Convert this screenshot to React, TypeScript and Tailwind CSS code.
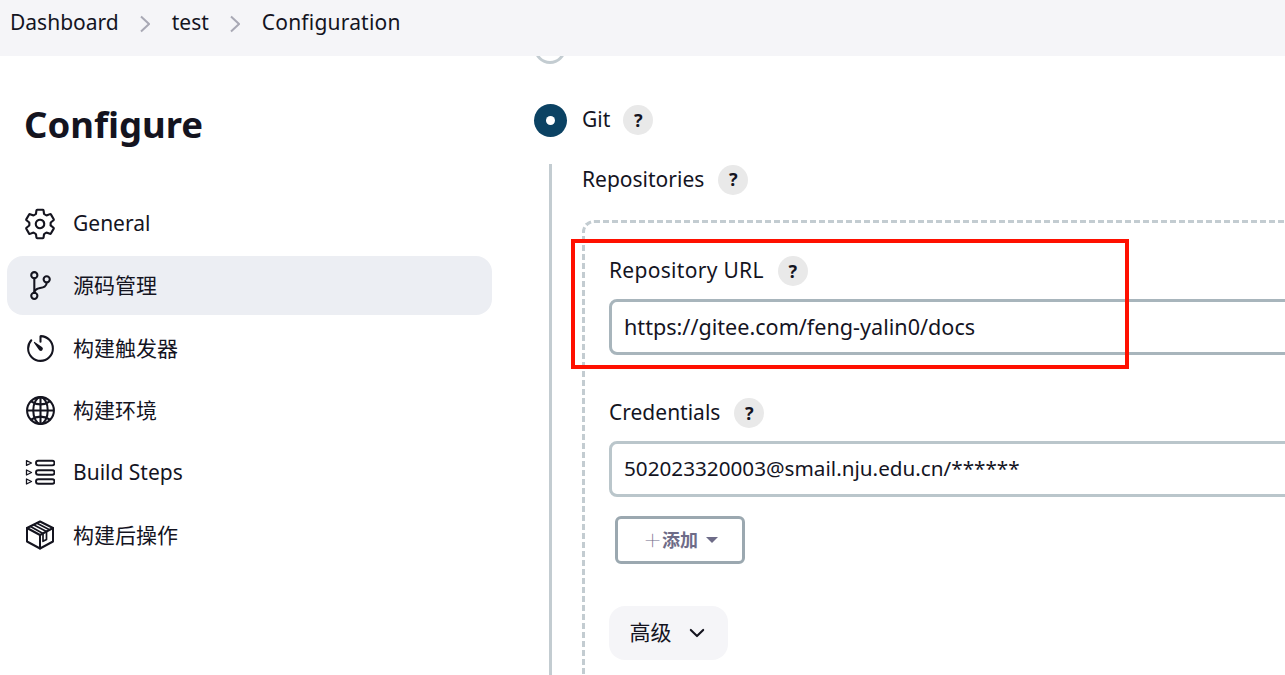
import React from "react";
import { IoSettingsOutline, IoGitBranchOutline, IoTimerOutline, IoGlobeOutline, IoChevronDown } from "react-icons/io5";

const font = { fontFamily: '"Noto Sans", "Noto Sans CJK SC", sans-serif' };

function Help() {
  return (
    <span className="flex h-[30px] w-[30px] shrink-0 items-center justify-center rounded-full bg-[#e9e9e9] text-[18px] font-bold text-[#14141f]">?</span>
  );
}

function Crumb() {
  return (
    <svg className="mx-[21.5px] mt-[1px]" width="10" height="18" viewBox="0 0 10 18" fill="none" stroke="#a9a9b5" strokeWidth="2">
      <path d="M1 1.5 L9 9 L1 16.5" />
    </svg>
  );
}

function StepsIcon() {
  return (
    <svg width="30" height="30" viewBox="0 0 30 30" fill="none" stroke="#14141f" strokeWidth="1.9" strokeLinejoin="round">
      <rect x="11" y="2.8" width="18.5" height="4.6" rx="2.3" />
      <rect x="11" y="12.2" width="18.5" height="4.6" rx="2.3" />
      <rect x="11" y="21.2" width="18.5" height="4.6" rx="2.3" />
      <path d="M1.5 2.6 L6.5 5 L1.5 7.4 Z" strokeWidth="1.3" />
      <path d="M1.5 12 L6.5 14.5 L1.5 17 Z" strokeWidth="1.3" />
      <path d="M1.5 21 L6.5 23.5 L1.5 26 Z" strokeWidth="1.3" />
    </svg>
  );
}

function PackageIcon() {
  return (
    <svg width="30" height="30" viewBox="0 0 30 30" fill="none" stroke="#14141f" strokeWidth="2" strokeLinejoin="round" strokeLinecap="round">
      <path d="M15 1.5 L28 8 V21.5 L15 28.5 L2 21.5 V8 Z" />
      <path d="M2 8 L15 15 L28 8" />
      <path d="M15 15 V28.5" />
      <path d="M8.5 4.8 L21.5 11.6 V19.5 L18 21.3 V13.4 L5.5 6.4" strokeWidth="1.7" />
      <path d="M12 3.2 L24.5 9.8" strokeWidth="1.7" />
    </svg>
  );
}

function NavItem({ icon, label, active }: { icon: React.ReactNode; label: string; active?: boolean }) {
  return (
    <div className={`flex h-[59px] items-center gap-[18px] rounded-[16px] pl-[18px] text-[21px] text-[#14141f] ${active ? "bg-[#eceef3]" : ""}`}>
      <span className="flex h-[30px] w-[30px] items-center justify-center">{icon}</span>
      <span>{label}</span>
    </div>
  );
}

function Field({ label, value, borderClass, labelClass, textClass }: { label: string; value: string; borderClass: string; labelClass: string; textClass: string }) {
  return (
    <div>
      <div className="flex h-[30px] items-center gap-[14px] text-[21px] text-[#14141f]">
        <span className={labelClass}>{label}</span>
        <Help />
      </div>
      <div className={`mt-[13px] flex h-[56px] w-[760px] items-center rounded-[8px] border-[3px] pl-[12px] text-[#14141f] ${textClass} ${borderClass}`}>
        {value}
      </div>
    </div>
  );
}

export default function App() {
  return (
    <div className="relative h-[675px] w-[1285px] overflow-hidden bg-white" style={font}>
      <header className="relative z-10 flex h-[56px] items-center bg-[#f5f5f8] pb-[10px] pl-[10px] text-[21px] text-[#14141f]">
        <span>Dashboard</span>
        <Crumb />
        <span>test</span>
        <Crumb />
        <span className="tracking-[0.2px]">Configuration</span>
      </header>

      <div className="flex">
        <aside className="ml-[7px] w-[485px] shrink-0">
          <h1 className="mb-[42px] ml-[17px] mt-[40px] text-[36.5px] font-bold leading-[56px] text-[#14141f]">Configure</h1>
          <div className="flex flex-col gap-[3.4px]">
            <NavItem icon={<IoSettingsOutline className="shrink-0 text-[34px]" />} label="General" />
            <NavItem active icon={<IoGitBranchOutline className="shrink-0 text-[33px]" />} label="源码管理" />
            <NavItem icon={<IoTimerOutline className="shrink-0 text-[33px]" />} label="构建触发器" />
            <NavItem icon={<IoGlobeOutline className="shrink-0 text-[33px]" />} label="构建环境" />
            <NavItem icon={<StepsIcon />} label="Build Steps" />
            <NavItem icon={<PackageIcon />} label="构建后操作" />
          </div>
        </aside>

        <main className="ml-[42px] min-w-0 flex-1">
          <div className="-mt-[24px] h-[32px] w-[32px] rounded-full border-[3px] border-[#c3ccd1]" />
          <div className="mt-[40px] flex h-[32px] items-center">
            <span className="flex h-[33px] w-[33px] items-center justify-center rounded-full bg-[#0b4263]">
              <span className="h-[9px] w-[9px] rounded-full bg-white" />
            </span>
            <span className="ml-[15px] text-[21px] text-[#14141f]">Git</span>
            <span className="ml-[13px]"><Help /></span>
          </div>
          <div className="ml-[15px] mt-[28px] h-[520px] border-l-[3px] border-[#c3ccd1] pl-[30px]">
            <div className="flex h-[30px] items-center gap-[14px] pt-[1px] text-[21px] text-[#14141f]">
              <span>Repositories</span>
              <Help />
            </div>
            <div className="mt-[26px] h-[500px] w-[760px] rounded-tl-[12px] border-l-[3px] border-t-[3px] border-dashed border-[#c3ccd1] pl-[24px] pt-[33px]">
              <Field label="Repository URL" value="https://gitee.com/feng-yalin0/docs" borderClass="border-[#a8b5bc]" labelClass="tracking-[0.3px]" textClass="text-[21.6px]" />
              <div className="mt-[43px]">
                <Field label="Credentials" value="502023320003@smail.nju.edu.cn/******" borderClass="border-[#bac6cb]" labelClass="" textClass="text-[20.7px]" />
              </div>
              <div className="ml-[6px] mt-[19px] flex h-[48px] w-[130px] items-center justify-center rounded-[6px] border-[3px] border-[#9ba8b0] pl-[2px] text-[18px] font-bold text-[#6e6c88]">
                <span className="mr-[1px] text-[30px] font-thin leading-none">+</span>
                <span>添加</span>
                <span className="ml-[8px] h-0 w-0 border-x-[6px] border-t-[6px] border-x-transparent border-t-[#6e6c88]" />
              </div>
              <div className="mt-[42px] flex h-[54px] w-[119px] items-center justify-center gap-[14px] rounded-[16px] bg-[#f5f5f8] text-[21px] text-[#14141f]">
                <span>高级</span>
                <IoChevronDown className="text-[22px]" />
              </div>
            </div>
          </div>
        </main>
      </div>

      <div className="absolute left-[571px] top-[239px] h-[130px] w-[558px] border-[4px] border-[#ff1000]" />
    </div>
  );
}
